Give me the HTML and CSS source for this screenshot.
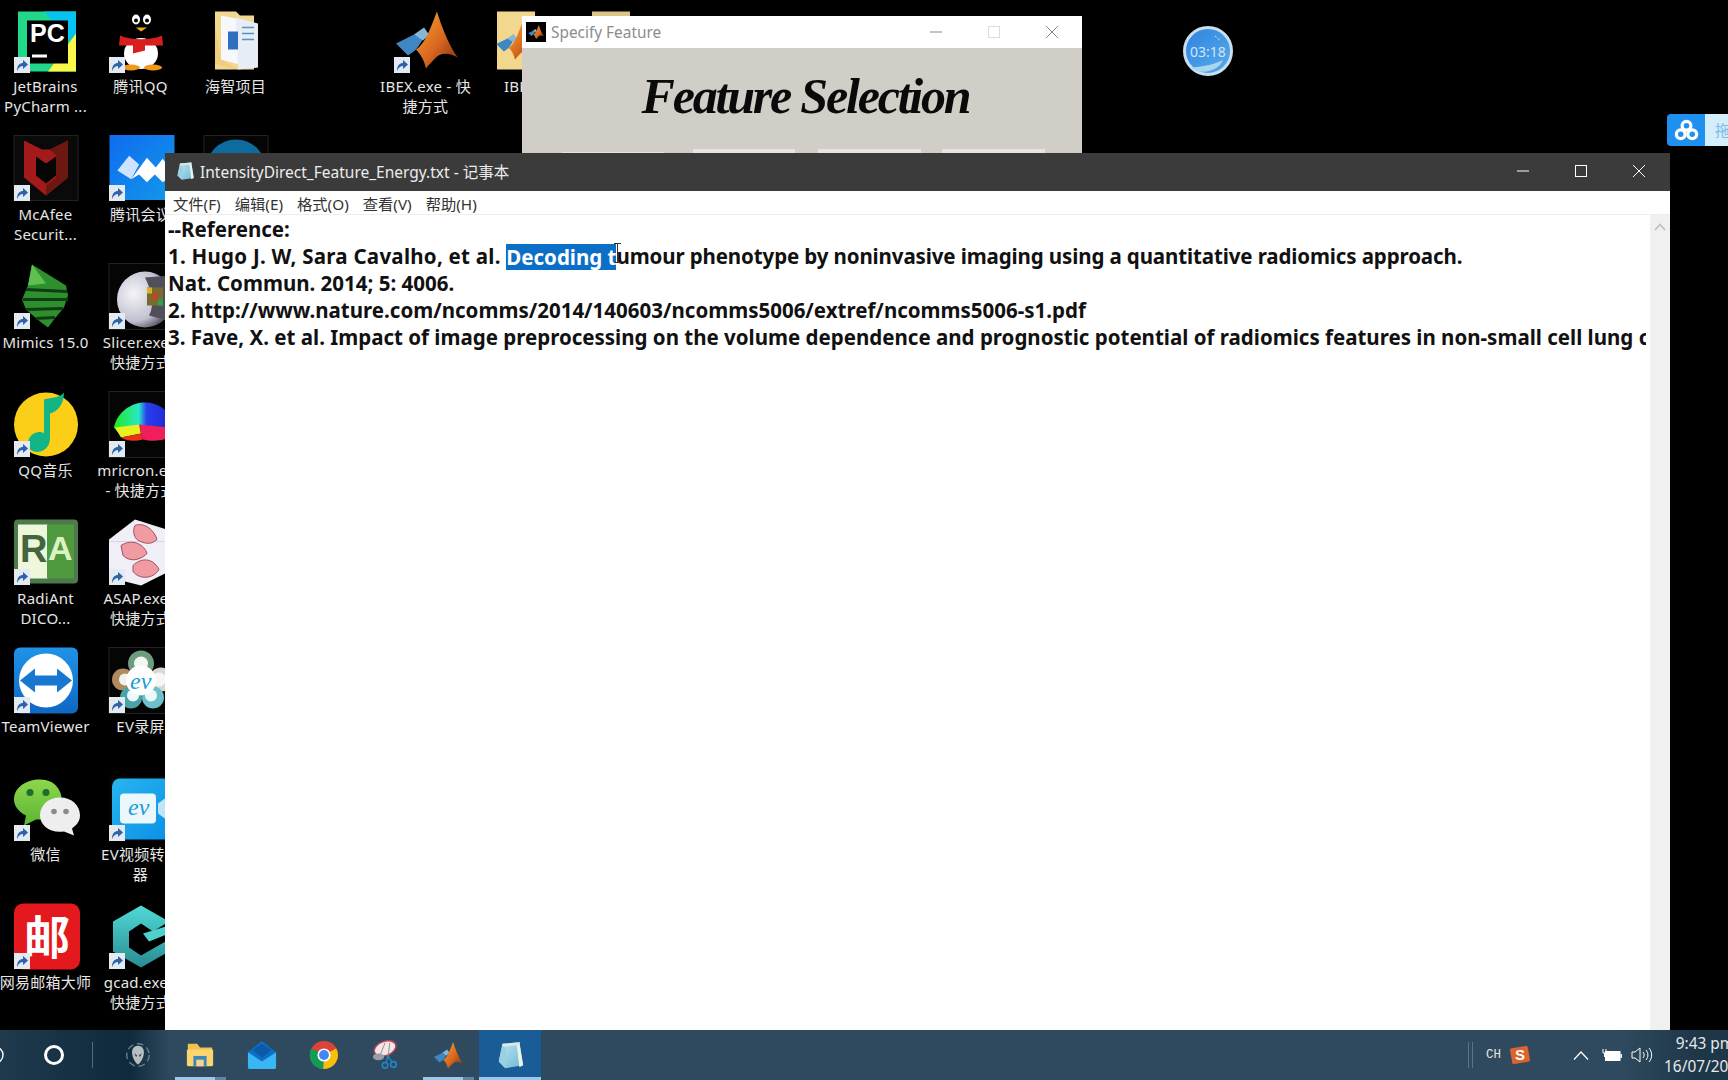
FILE: index.html
```html
<!DOCTYPE html>
<html lang="zh">
<head>
<meta charset="utf-8">
<title>Desktop</title>
<link rel="stylesheet" href="styles.css">
</head>
<body>
<svg class="defs" xmlns="http://www.w3.org/2000/svg">
  <defs>
    <linearGradient id="gOrange" x1="0" y1="0" x2="1" y2="1"><stop offset="0" stop-color="#f6a535"/><stop offset=".55" stop-color="#d8661e"/><stop offset="1" stop-color="#7a2a10"/></linearGradient>
    <linearGradient id="gBlueV" x1="0" y1="0" x2="0" y2="1"><stop offset="0" stop-color="#1f93e8"/><stop offset="1" stop-color="#0e67c4"/></linearGradient>
    <linearGradient id="gSky" x1="0" y1="0" x2="1" y2="1"><stop offset="0" stop-color="#27b5f0"/><stop offset="1" stop-color="#0b8fe6"/></linearGradient>
    <linearGradient id="gMeet" x1="0" y1="0" x2="1" y2="1"><stop offset="0" stop-color="#0f6cf0"/><stop offset="1" stop-color="#1398e8"/></linearGradient>
    <linearGradient id="gGreen" x1="0" y1="0" x2="0" y2="1"><stop offset="0" stop-color="#8ed64e"/><stop offset="1" stop-color="#5cb531"/></linearGradient>
    <radialGradient id="gSphere" cx=".3" cy=".4" r=".7"><stop offset="0" stop-color="#f4f4f8"/><stop offset=".7" stop-color="#c0c0d0"/><stop offset="1" stop-color="#55505e"/></radialGradient>
    <linearGradient id="gPad" x1="0" y1="0" x2="1" y2="1"><stop offset="0" stop-color="#bfe6f3"/><stop offset="1" stop-color="#6fb9d3"/></linearGradient>
    <linearGradient id="gTeal" x1="0" y1="0" x2="0" y2="1"><stop offset="0" stop-color="#4fdad6"/><stop offset="1" stop-color="#2a8b92"/></linearGradient>
    <linearGradient id="gMri" x1="0" y1="0" x2="1" y2="0"><stop offset="0" stop-color="#22e81e"/><stop offset=".42" stop-color="#27e8c8"/><stop offset=".55" stop-color="#2a40ee"/><stop offset="1" stop-color="#1a22c8"/></linearGradient>

    <symbol id="i-short" viewBox="0 0 16 16"><rect width="16" height="16" fill="#e3eaf2"/><path d="M3 14 C3 8 6 6 9 6 L9 3 L14 7.5 L9 12 L9 9 C6.5 9 4.5 10.5 3 14Z" fill="#2d62a8"/></symbol>

    <symbol id="i-matlab" viewBox="0 0 64 64"><path d="M2 36 L20 27 L29 32 C26 36 24 40 21 43 L14 48Z" fill="#3f86c4"/><path d="M20 27 L30 20 L35 27 L29 33Z" fill="#86b6d8"/><path d="M43 4 C47 18 56 40 64 50 C56 46 48 44 42 50 C38 54 34 58 32 61 C30 52 26 46 22 42 C32 36 38 16 43 4Z" fill="url(#gOrange)"/></symbol>

    <symbol id="i-notepad" viewBox="0 0 64 64"><path d="M16 8 L52 5 L60 54 L22 60 L8 46Z" fill="url(#gPad)"/><path d="M8 46 L22 60 L24 20 L16 8Z" fill="#9bd0e2"/><path d="M52 5 L60 54 L52 58 L46 8Z" fill="#e7f3e7"/><path d="M16 8 L52 5 L52 11 L16 14Z" fill="#dbe7ea"/></symbol>

    <symbol id="i-folder" viewBox="0 0 64 64"><path d="M6 8 H26 L32 16 H58 V54 H6Z" fill="#f3c14e"/><rect x="4" y="20" width="56" height="36" rx="3" fill="#fbd66f"/><rect x="18" y="34" width="28" height="22" fill="#3f86b8"/><rect x="24" y="42" width="16" height="14" fill="#f3d58b"/></symbol>
  </defs>
</svg>

<main class="desktop">
  <div class="icon-grid">
    <!-- Column 1 -->
    <article class="dicon">
      <div class="dicon-art">
        <svg class="art" viewBox="0 0 64 64"><rect x="4" y="4" width="58" height="60" fill="#21d789"/><path d="M30 4 H62 V40Z" fill="#07c3f2"/><path d="M62 26 V64 H34Z" fill="#fcf84a"/><rect x="13" y="13" width="41" height="43" fill="#000"/><text class="pc-text" x="16" y="34">PC</text><rect x="18" y="47" width="15" height="3" fill="#fff"/></svg>
        <svg class="badge"><use href="#i-short"/></svg>
      </div>
      <p class="dlabel">JetBrains<br>PyCharm ...</p>
    </article>
    <article class="dicon">
      <div class="dicon-art">
        <svg class="art" viewBox="0 0 64 64"><rect x="0" y="0" width="64" height="65" fill="#0a0a0a" stroke="#222"/><path d="M10 5 L28 14 L36 14 L54 5 V42 L32 60 L10 42Z" fill="#a31a1a"/><path d="M36 14 L54 5 V42 L32 60 V50 L42 42 V20Z" fill="#6c1710"/><path d="M22 21 L32 28 L42 21 V40 L32 48 L22 40Z" fill="#060606"/></svg>
        <svg class="badge"><use href="#i-short"/></svg>
      </div>
      <p class="dlabel">McAfee<br>Securit...</p>
    </article>
    <article class="dicon">
      <div class="dicon-art">
        <svg class="art" viewBox="0 0 64 64"><path d="M18 1 L52 22 L54 32 L50 44 L40 56 L34 64 L26 58 L12 46 L8 36 L14 22Z" fill="#2e8f2e"/><path d="M18 1 L32 20 L14 22Z" fill="#5fc04f"/><path d="M12 26 L53 28 M9 36 L54 36 M12 46 L49 45 M22 55 L41 54" stroke="#0f3d12" stroke-width="3" fill="none"/></svg>
        <svg class="badge"><use href="#i-short"/></svg>
      </div>
      <p class="dlabel">Mimics 15.0</p>
    </article>
    <article class="dicon">
      <div class="dicon-art">
        <svg class="art" viewBox="0 0 64 64"><circle cx="32" cy="33" r="32" fill="#fbcf17"/><path d="M30 8 C38 6 46 6 50 1 C50 12 44 20 36 22 V47 C36 56 28 62 20 60 C12 58 12 46 20 42 C24 40 28 40 30 42Z" fill="#12b585"/></svg>
        <svg class="badge"><use href="#i-short"/></svg>
      </div>
      <p class="dlabel">QQ音乐</p>
    </article>
    <article class="dicon">
      <div class="dicon-art">
        <svg class="art" viewBox="0 0 64 64"><rect x="0" y="0" width="64" height="64" rx="4" fill="#4d7a4c"/><rect x="4" y="5" width="30" height="54" fill="#eef6dc"/><rect x="33" y="5" width="27" height="54" fill="#4f9a3f"/><text class="ra-r" x="6" y="42">R</text><text class="ra-a" x="34" y="40">A</text></svg>
        <svg class="badge"><use href="#i-short"/></svg>
      </div>
      <p class="dlabel">RadiAnt<br>DICO...</p>
    </article>
    <article class="dicon">
      <div class="dicon-art">
        <svg class="art" viewBox="0 0 64 64"><rect x="0" y="0" width="64" height="66" rx="6" fill="url(#gBlueV)"/><circle cx="32" cy="33" r="27" fill="#fff"/><path d="M6 33 L21 21 V28 H43 V21 L58 33 L43 45 V38 H21 V45Z" fill="#1877d0"/></svg>
        <svg class="badge"><use href="#i-short"/></svg>
      </div>
      <p class="dlabel">TeamViewer</p>
    </article>
    <article class="dicon">
      <div class="dicon-art">
        <svg class="art" viewBox="0 0 64 64"><path d="M26 4 C42 4 48 16 48 26 C48 38 36 44 26 44 L22 44 L10 50 L12 40 C4 36 0 30 0 24 C0 12 12 4 26 4Z" fill="url(#gGreen)"/><circle cx="16" cy="17" r="3.5" fill="#1d6e2c"/><circle cx="32" cy="17" r="3.5" fill="#1d6e2c"/><path d="M46 22 C58 22 66 30 66 40 C66 46 62 50 58 53 L60 60 L50 56 C36 58 26 50 26 40 C26 30 34 22 46 22Z" fill="#eeeeee"/><circle cx="40" cy="36" r="2.8" fill="#8a8a8a"/><circle cx="52" cy="36" r="2.8" fill="#8a8a8a"/></svg>
        <svg class="badge"><use href="#i-short"/></svg>
      </div>
      <p class="dlabel">微信</p>
    </article>
    <article class="dicon">
      <div class="dicon-art">
        <svg class="art" viewBox="0 0 64 64"><rect x="0" y="0" width="66" height="66" rx="9" fill="#e4191d"/><text class="mail-glyph" x="33" y="50">邮</text></svg>
        <svg class="badge"><use href="#i-short"/></svg>
      </div>
      <p class="dlabel">网易邮箱大师</p>
    </article>

    <!-- Column 2 -->
    <article class="dicon c2">
      <div class="dicon-art">
        <svg class="art" viewBox="0 0 64 64"><ellipse cx="32" cy="17" rx="14" ry="15" fill="#000"/><ellipse cx="27" cy="12" rx="4" ry="5" fill="#fff"/><ellipse cx="38" cy="12" rx="4" ry="5" fill="#fff"/><circle cx="27" cy="13" r="2" fill="#000"/><circle cx="38" cy="13" r="2" fill="#000"/><path d="M27 20 H38 L32 24Z" fill="#f2ab1d"/><ellipse cx="32" cy="46" rx="17" ry="15.5" fill="#fff"/><path d="M11 28 C22 33 42 33 53 28 L54 38 H36 V43 L24 46 V38 H10Z" fill="#d81e1e"/><ellipse cx="22" cy="60" rx="9" ry="3" fill="#ef9a1a"/><ellipse cx="44" cy="60" rx="9" ry="3" fill="#ef9a1a"/></svg>
        <svg class="badge"><use href="#i-short"/></svg>
      </div>
      <p class="dlabel">腾讯QQ</p>
    </article>
    <article class="dicon">
      <div class="dicon-art">
        <svg class="art art-wide" viewBox="0 0 66 66"><rect width="66" height="66" fill="url(#gMeet)"/><path d="M8 36 L20 21 L30 30 L22 45Z" fill="#cfe3ff"/><path d="M22 45 L38 23 L47 33 L54 24 L66 40 L54 48 L46 40 L38 48 L30 40Z" fill="#fff"/></svg>
        <svg class="badge"><use href="#i-short"/></svg>
      </div>
      <p class="dlabel">腾讯会议</p>
    </article>
    <article class="dicon">
      <div class="dicon-art">
        <svg class="art" viewBox="0 0 64 64"><rect width="64" height="66" fill="#050505" stroke="#222"/><circle cx="36" cy="36" r="28" fill="url(#gSphere)"/><path d="M36 14 L62 12 V58 L40 52 C46 42 42 26 36 14Z" fill="#50505a"/><rect x="38" y="24" width="16" height="18" fill="#7a6a30"/><rect x="38" y="24" width="5" height="6" fill="#d8b030"/><rect x="44" y="30" width="5" height="6" fill="#c84020"/><rect x="49" y="36" width="5" height="6" fill="#30a050"/></svg>
        <svg class="badge"><use href="#i-short"/></svg>
      </div>
      <p class="dlabel">Slicer.exe -<br>快捷方式</p>
    </article>
    <article class="dicon">
      <div class="dicon-art">
        <svg class="art" viewBox="0 0 64 64"><rect width="64" height="66" fill="#050505" stroke="#222"/><path d="M5 36 C8 22 20 12 34 11 C48 10 60 18 64 32 L60 42 C50 38 40 36 32 36 L10 42Z" fill="url(#gMri)"/><path d="M6 36 L30 33 L32 42 L12 46Z" fill="#e8f01e"/><path d="M30 33 L60 36 L62 46 C50 50 42 50 34 48 L32 42Z" fill="#f01e5a"/><path d="M12 46 L32 42 L34 48 C26 50 18 50 12 46Z" fill="#e8321e"/></svg>
        <svg class="badge"><use href="#i-short"/></svg>
      </div>
      <p class="dlabel">mricron.exe<br>- 快捷方式</p>
    </article>
    <article class="dicon">
      <div class="dicon-art">
        <svg class="art" viewBox="0 0 64 64"><path d="M0 20 L26 0 L64 12 V50 L32 66 L0 58Z" fill="#f0eef6"/><path d="M0 22 H62" stroke="#d8d4e6" stroke-width="1"/><path d="M26 6 C36 2 46 12 48 20 C42 26 34 24 28 20 C24 16 24 10 26 6Z" fill="#f09aa2" stroke="#a05060"/><path d="M12 26 C24 18 36 26 38 34 C30 42 20 42 14 36Z" fill="#f09aa2" stroke="#a05060"/><path d="M24 46 C32 38 44 38 50 50 C44 60 30 60 24 52Z" fill="#f09aa2" stroke="#a05060"/></svg>
        <svg class="badge"><use href="#i-short"/></svg>
      </div>
      <p class="dlabel">ASAP.exe -<br>快捷方式</p>
    </article>
    <article class="dicon">
      <div class="dicon-art">
        <svg class="art" viewBox="0 0 64 64"><rect width="64" height="66" fill="#050505" stroke="#222"/><circle cx="32" cy="16" r="13" fill="#6e9c7e"/><circle cx="14" cy="32" r="11" fill="#b08a5e"/><circle cx="52" cy="32" r="12" fill="#d8d8d2"/><circle cx="22" cy="50" r="11" fill="#4aa3a8"/><circle cx="44" cy="50" r="11" fill="#6cc0c8"/><circle cx="32" cy="16" r="7" fill="#f2f6f2"/><circle cx="16" cy="32" r="6" fill="#f2f2ec"/><circle cx="50" cy="32" r="7" fill="#f6f6f6"/><circle cx="24" cy="48" r="6" fill="#eef8f8"/><circle cx="42" cy="48" r="6" fill="#eef8f8"/><circle cx="32" cy="33" r="15" fill="#fff"/><text class="ev-text" x="21" y="41">ev</text></svg>
        <svg class="badge"><use href="#i-short"/></svg>
      </div>
      <p class="dlabel">EV录屏</p>
    </article>
    <article class="dicon">
      <div class="dicon-art">
        <svg class="art" viewBox="0 0 64 64"><rect width="64" height="66" fill="#050505"/><rect x="3" y="3" width="60" height="61" rx="8" fill="url(#gSky)"/><rect x="11" y="18" width="36" height="30" rx="4" fill="#eaf7fd"/><path d="M49 28 L60 20 V46 L49 38Z" fill="#bfe5f7"/><text class="ev-text" x="19" y="39">ev</text></svg>
        <svg class="badge"><use href="#i-short"/></svg>
      </div>
      <p class="dlabel">EV视频转换<br>器</p>
    </article>
    <article class="dicon">
      <div class="dicon-art">
        <svg class="art" viewBox="0 0 64 64"><path d="M32 2 L60 18 L44 28 L32 20 L20 28 V44 L32 52 L60 36 V48 L32 64 L4 48 V18Z" fill="url(#gTeal)"/><path d="M34 30 L60 22 V30 L40 38Z" fill="#4fd0cc"/></svg>
        <svg class="badge"><use href="#i-short"/></svg>
      </div>
      <p class="dlabel">gcad.exe -<br>快捷方式</p>
    </article>

    <!-- Column 3 -->
    <article class="dicon c3">
      <div class="dicon-art">
        <svg class="art" viewBox="0 0 64 64"><path d="M11 4 H32 L36 8 H50 V62 H11Z" fill="#f2d78e"/><path d="M17 8 L46 14 L46 60 L17 52Z" fill="#f6f8fb"/><path d="M32 10 L54 16 V60 L34 62Z" fill="#e6edf5"/><path d="M38 20 H50 M38 26 H50 M38 32 H50" stroke="#5d8fc4" stroke-width="1.5"/><rect x="24" y="24" width="10" height="18" fill="#2f6fc0"/><path d="M11 18 L17 52 L34 62 L11 56Z" fill="#efcd7c"/></svg>
      </div>
      <p class="dlabel">海智项目</p>
    </article>
    <article class="dicon c3">
      <div class="dicon-art">
        <svg class="art" viewBox="0 0 64 64"><rect width="64" height="66" fill="#050505" stroke="#222"/><circle cx="32" cy="34" r="30" fill="#0d6c9f"/></svg>
      </div>
    </article>

    <!-- Columns 5-7, top row -->
    <article class="dicon c5">
      <div class="dicon-art">
        <svg class="art" viewBox="0 0 64 64"><use href="#i-matlab"/></svg>
        <svg class="badge"><use href="#i-short"/></svg>
      </div>
      <p class="dlabel">IBEX.exe - 快<br>捷方式</p>
    </article>
    <article class="dicon c6">
      <div class="dicon-art">
        <svg class="art" viewBox="0 0 64 64"><path d="M8 4 H46 V62 H8Z" fill="#f2d78e"/><svg x="6" y="14" width="40" height="40" viewBox="0 0 64 64"><use href="#i-matlab"/></svg></svg>
      </div>
      <p class="dlabel">IBEX</p>
    </article>
    <article class="dicon c7">
      <div class="dicon-art">
        <svg class="art" viewBox="0 0 64 64"><path d="M8 4 H46 V62 H8Z" fill="#dcc48a"/></svg>
      </div>
    </article>
  </div>

  <div class="timer">
    <svg class="timer-wave" viewBox="0 0 50 50"><path d="M8 42 C18 40 28 40 40 34 C36 44 20 50 8 42Z" fill="#a9d6ef"/><path d="M32 10 L38 15" stroke="#cfe6fa" stroke-width="1" stroke-dasharray="2 2"/></svg>
    <span class="timer-text">03:18</span>
  </div>

  <aside class="cloud">
    <div class="cloud-logo">
      <svg class="cloud-svg" viewBox="0 0 26 24"><g fill="none" stroke="#fff" stroke-width="3.4"><circle cx="13" cy="7" r="4.6"/><circle cx="7" cy="16" r="4.6"/><circle cx="19" cy="16" r="4.6"/></g></svg>
    </div>
    <span class="cloud-text">拖</span>
  </aside>

  <section class="win feature">
    <header class="f-title">
      <svg class="f-logo" viewBox="0 0 64 64"><rect width="64" height="64" fill="#000"/><svg x="6" y="6" width="52" height="52" viewBox="0 0 64 64"><use href="#i-matlab"/></svg></svg>
      <span class="f-name">Specify Feature</span>
      <div class="ctrls">
        <span class="ctrl"><svg class="glyph dim" viewBox="0 0 12 12"><path d="M0 6 H12"/></svg></span>
        <span class="ctrl"><svg class="glyph dimmer" viewBox="0 0 12 12"><rect x=".5" y=".5" width="11" height="11"/></svg></span>
        <span class="ctrl"><svg class="glyph dim" viewBox="0 0 12 12"><path d="M0 0 L12 12 M12 0 L0 12"/></svg></span>
      </div>
    </header>
    <div class="f-body">
      <h1 class="f-heading">Feature Selection</h1>
      <div class="f-btns">
        <span class="f-btn low"></span>
        <span class="f-btn b2"></span>
        <span class="f-btn b3"></span>
        <span class="f-btn b4"></span>
      </div>
    </div>
  </section>

  <section class="win notepad">
    <header class="n-title">
      <svg class="n-logo" viewBox="0 0 64 64"><use href="#i-notepad"/></svg>
      <span class="n-name">IntensityDirect_Feature_Energy.txt - 记事本</span>
      <div class="ctrls">
        <span class="ctrl"><svg class="glyph light" viewBox="0 0 12 12"><path d="M0 6 H12"/></svg></span>
        <span class="ctrl"><svg class="glyph light" viewBox="0 0 12 12"><rect x=".5" y=".5" width="11" height="11"/></svg></span>
        <span class="ctrl"><svg class="glyph light" viewBox="0 0 12 12"><path d="M0 0 L12 12 M12 0 L0 12"/></svg></span>
      </div>
    </header>
    <nav class="n-menu">
      <span class="m1">文件(F)</span>
      <span class="m2">编辑(E)</span>
      <span class="m3">格式(O)</span>
      <span class="m4">查看(V)</span>
      <span class="m5">帮助(H)</span>
    </nav>
    <div class="n-body">
      <div class="n-text">
        <div class="line">--Reference:</div>
        <div class="line"><span class="pre">1. Hugo J. W, Sara Cavalho, et al. </span><span class="sel">Decoding t</span><span class="ibeam"><svg class="ibeam-svg" viewBox="0 0 7 20"><path d="M0 .5 H7 M0 19.5 H7 M3.5 .5 V19.5" fill="none" stroke="#333" stroke-width="1"/></svg></span><span class="post">umour phenotype by noninvasive imaging using a quantitative radiomics approach.</span></div>
        <div class="line">Nat. Commun. 2014; 5: 4006.</div>
        <div class="line">2. http://www.nature.com/ncomms/2014/140603/ncomms5006/extref/ncomms5006-s1.pdf</div>
        <div class="line">3. Fave, X. et al. Impact of image preprocessing on the volume dependence and prognostic potential of radiomics features in non-small cell lung cancer.</div>
      </div>
      <div class="n-scroll">
        <svg class="n-arrow" viewBox="0 0 12 8"><path d="M1 7 L6 1.5 L11 7" fill="none" stroke="#bdbdbd" stroke-width="1.6"/></svg>
      </div>
    </div>
  </section>
</main>

<footer class="taskbar">
  <div class="tb-left">
    <svg class="tb-search" viewBox="0 0 4 18"><circle cx="-5" cy="9" r="8" fill="none" stroke="#fff" stroke-width="1.4"/></svg>
    <span class="tb-cortana"></span>
    <span class="tb-sep"></span>
  </div>
  <div class="tb-apps">
    <span class="tb-btn">
      <svg class="tb-icon" viewBox="0 0 64 64"><circle cx="32" cy="32" r="24" fill="none" stroke="#6b7f8c" stroke-width="3" stroke-dasharray="14 8"/><path d="M32 12 C44 12 46 24 44 32 C42 42 36 50 32 52 C28 50 22 42 20 32 C18 24 20 12 32 12Z" fill="#b6bec3"/><path d="M24 28 L30 33 L28 36 Z M40 28 L34 33 L36 36Z" fill="#1a2b36"/></svg>
    </span>
    <span class="tb-btn open wide">
      <svg class="tb-icon" viewBox="0 0 64 64"><use href="#i-folder"/></svg>
    </span>
    <span class="tb-btn">
      <svg class="tb-icon" viewBox="0 0 64 64"><path d="M32 2 L62 26 V60 H2 V26Z" fill="#0f6fc6"/><path d="M2 26 L32 46 L62 26 V58 a4 4 0 0 1 -4 4 H6 a4 4 0 0 1 -4 -4Z" fill="#39b6f4"/><path d="M12 22 L32 38 L52 22 L32 8Z" fill="#0a5aa8"/></svg>
    </span>
    <span class="tb-btn">
      <svg class="tb-icon" viewBox="0 0 64 64"><circle cx="32" cy="32" r="30" fill="#db4437"/><path d="M32 32 L58 18 A30 30 0 0 1 30 62Z" fill="#f4c20d"/><path d="M32 32 L30 62 A30 30 0 0 1 5 18Z" fill="#0f9d58"/><circle cx="32" cy="32" r="14" fill="#fff"/><circle cx="32" cy="32" r="10.5" fill="#4285f4"/></svg>
    </span>
    <span class="tb-btn">
      <svg class="tb-icon" viewBox="0 0 64 64"><ellipse cx="30" cy="18" rx="24" ry="15" transform="rotate(-20 30 18)" fill="#f2e6e6" stroke="#c2435a" stroke-width="3"/><path d="M18 36 L30 6 M40 6 L36 40" stroke="#8c8c8c" stroke-width="2"/><ellipse cx="16" cy="36" rx="12" ry="7" fill="#9a9ca8"/><circle cx="30" cy="54" r="6" fill="none" stroke="#1f86c8" stroke-width="3.5"/><circle cx="48" cy="52" r="6" fill="none" stroke="#1f86c8" stroke-width="3.5"/><path d="M32 49 L36 34 M45 47 L36 34" stroke="#1f86c8" stroke-width="3"/></svg>
    </span>
    <span class="tb-btn open">
      <svg class="tb-icon" viewBox="0 0 64 64"><use href="#i-matlab"/></svg>
    </span>
    <span class="tb-btn active">
      <svg class="tb-icon" viewBox="0 0 64 64"><use href="#i-notepad"/></svg>
    </span>
  </div>
  <div class="tb-tray">
    <span class="tray-sep"></span>
    <span class="tray-ch">CH</span>
    <svg class="tray-sogou" viewBox="0 0 22 22"><rect x="2" y="3" width="18" height="16" rx="2" transform="rotate(-10 11 11)" fill="#d9642c"/><text class="sogou-s" x="11" y="16">S</text></svg>
    <svg class="tray-caret" viewBox="0 0 16 9"><path d="M1 8.5 L8 1 L15 8.5" fill="none" stroke="#fff" stroke-width="1.2"/></svg>
    <svg class="tray-batt" viewBox="0 0 20 14"><path d="M1 1 V5 H4 V1 M2.5 5 V9" stroke="#fff" fill="none"/><rect x="3.5" y="3.5" width="14.5" height="9" fill="#fff" stroke="#fff"/><rect x="18.5" y="6" width="1.5" height="4" fill="#fff"/></svg>
    <svg class="tray-vol" viewBox="0 0 22 16"><path d="M1 5 H4 L9 1 V15 L4 11 H1Z" fill="none" stroke="#fff" stroke-width="1"/><path d="M12 5 C13.5 7 13.5 9 12 11 M15 3 C17.5 6 17.5 10 15 13 M18 1 C21.5 5 21.5 11 18 15" fill="none" stroke="#fff" stroke-width="1"/></svg>
    <div class="tray-clock"><span>9:43 pm</span><span>16/07/2020</span></div>
  </div>
</footer>
</body>
</html>
```
FILE: styles.css
```css
* { box-sizing: border-box; }

html, body {
  margin: 0;
  height: 100%;
  overflow: hidden;
  background: #000;
}

body {
  display: flex;
  flex-direction: column;
  width: 1728px;
  height: 1080px;
  font-family: "Noto Sans", "Noto Sans CJK SC", sans-serif;
}

.defs { display: block; width: 0; height: 0; }

.desktop {
  position: relative;
  flex: none;
  height: 1030px;
  overflow: hidden;
  background: #000;
}

/* Desktop icons */
.icon-grid {
  display: grid;
  grid-auto-flow: column;
  grid-template-columns: repeat(7, 95px);
  grid-template-rows: repeat(8, 128px);
  margin-left: -2px;
  padding-top: 7px;
  width: 700px;
}

.dicon { display: flex; flex-direction: column; align-items: center; }
.c2 { grid-column: 2; grid-row: 1; }
.c3 { grid-column: 3; }
.c5 { grid-column: 5; grid-row: 1; }
.c6 { grid-column: 6; grid-row: 1; }
.c7 { grid-column: 7; grid-row: 1; }

.dicon-art { position: relative; width: 64px; height: 65px; }
.art { display: block; width: 64px; height: 65px; overflow: visible; }
.art-wide { width: 66px; }
.badge { position: absolute; left: 0; bottom: -1px; width: 16px; height: 16px; }

.dlabel {
  margin: 4px 0 0;
  width: 95px;
  font-size: 15px;
  letter-spacing: .25px;
  line-height: 20px;
  color: #e6e6e6;
  text-align: center;
  white-space: nowrap;
}

.pc-text { font: 700 25px "Liberation Sans", sans-serif; fill: #fff; }
.ra-r { font: 700 38px "Liberation Sans", sans-serif; fill: #44663f; }
.ra-a { font: 700 34px "Liberation Sans", sans-serif; fill: #dcf2c4; }
.mail-glyph { font: 700 46px "Noto Sans CJK SC", sans-serif; fill: #fff; text-anchor: middle; }
.ev-text { font: italic 400 24px "Liberation Serif", serif; fill: #1c9bd8; }

/* Floating widgets */
.timer {
  position: absolute;
  left: 1183px;
  top: 26px;
  width: 50px;
  height: 50px;
  display: flex;
  align-items: center;
  justify-content: center;
  border-radius: 50%;
  border: 3px solid #c9dff0;
  background: linear-gradient(135deg, #2f84e2, #58abe6);
}
.timer-wave { position: absolute; left: -3px; top: -3px; width: 50px; height: 50px; }
.timer-text { position: relative; font-size: 14px; color: #cfe6fa; }

.cloud {
  position: absolute;
  left: 1667px;
  top: 114px;
  width: 61px;
  height: 32px;
  display: flex;
  border-radius: 4px 0 0 4px;
  overflow: hidden;
}
.cloud-logo {
  flex: none;
  width: 38px;
  display: flex;
  align-items: center;
  justify-content: center;
  background: #1f8ff0;
}
.cloud-svg { width: 25px; height: 23px; }
.cloud-text {
  flex: 1;
  padding-left: 10px;
  font-size: 15px;
  line-height: 32px;
  color: #7dbbe6;
  background: #d5eefc;
}

/* Windows */
.win { position: absolute; display: flex; flex-direction: column; }

.ctrls { display: flex; margin-left: auto; }
.ctrl { width: 58px; display: flex; align-items: center; justify-content: center; }
.glyph { width: 12px; height: 12px; fill: none; stroke-width: 1; overflow: visible; }
.glyph.light { stroke: #fff; }
.glyph.dim { stroke: #8b8b8b; }
.glyph.dimmer { stroke: #dcdcdc; }

.feature { left: 522px; top: 16px; width: 560px; height: 137px; background: #d0cec6; overflow: hidden; }
.f-title { flex: none; height: 32px; display: flex; align-items: center; background: #fff; padding-left: 4px; padding-right: 1px; }
.f-logo { flex: none; width: 20px; height: 20px; }
.f-name { margin-left: 5px; font-size: 15.4px; color: #8c8c8c; }
.f-body { flex: 1; display: flex; flex-direction: column; }
.f-heading {
  margin: 18px 0 0;
  padding-left: 7px;
  height: 66px;
  text-align: center;
  font: italic 700 50px/60px "Liberation Serif", serif;
  letter-spacing: -2.2px;
  color: #0a0a0a;
}
.f-btns { display: flex; align-items: flex-start; padding-left: 40px; margin-top: 17px; }
.f-btn { flex: none; width: 102px; height: 10px; background: #e6e5e1; }
.f-btn.low { margin-top: 3px; }
.f-btn.b2 { margin-left: 29px; }
.f-btn.b3 { margin-left: 23px; width: 103px; }
.f-btn.b4 { margin-left: 21px; width: 103px; }

.notepad { left: 165px; top: 153px; width: 1505px; height: 877px; background: #fff; }
.n-title { flex: none; height: 38px; display: flex; align-items: center; background: #3b3b3b; padding: 0 2px 2px 10px; }
.n-logo { flex: none; width: 20px; height: 20px; }
.n-name { margin-left: 5px; font-size: 15.5px; color: #ececec; white-space: nowrap; }

.n-menu { flex: none; height: 24px; display: flex; align-items: center; background: #fff; border-bottom: 1px solid #eee; font-size: 15.3px; color: #333; padding-left: 8px; }
.m2, .m3, .m4, .m5 { margin-left: 14px; }

.n-body { flex: 1; display: flex; min-height: 0; }
.n-text { flex: 1; min-width: 0; margin-right: 4px; overflow: hidden; padding: 1px 0 0 3px; font-weight: 700; font-size: 20.5px; line-height: 27px; color: #111; white-space: nowrap; }
.line { height: 27px; }
.pre { letter-spacing: .25px; }
.post { letter-spacing: -.12px; }
.sel { display: inline-block; height: 26px; line-height: 26px; background: #0b6fc8; color: #fff; vertical-align: top; margin-top: 1px; }
.ibeam { position: relative; }
.ibeam-svg { position: absolute; left: -2px; top: 1px; width: 7px; height: 20px; }
.n-scroll { flex: none; width: 20px; background: #f0f0f0; display: flex; justify-content: center; padding-top: 8px; }
.n-arrow { width: 12px; height: 8px; }

/* Taskbar */
.taskbar {
  flex: none;
  height: 50px;
  display: flex;
  background: linear-gradient(90deg, #1f394d 0, #0f2a3d 130px, #2f4a5e 170px, #2f4a5e 1620px, #1d3648 1700px);
}
.tb-left { flex: none; width: 107px; display: flex; align-items: center; }
.tb-search { flex: none; width: 4px; height: 18px; }
.tb-cortana { flex: none; margin-left: 40px; width: 20px; height: 20px; border: 3px solid #fff; border-radius: 50%; }
.tb-sep { flex: none; margin-left: 28px; width: 1px; height: 26px; background: #55697a; }

.tb-apps { flex: none; display: flex; }
.tb-btn { position: relative; flex: none; width: 62px; display: flex; align-items: center; justify-content: center; }
.tb-icon { width: 30px; height: 30px; overflow: visible; }
.tb-btn.open::after {
  content: "";
  position: absolute;
  left: 6px;
  right: 5px;
  bottom: 0;
  height: 3px;
  background: linear-gradient(90deg, #9cc8ee 78%, #5f86a6 78%);
}
.tb-btn.active { background: #1a5c96; }
.tb-btn.active::after {
  content: "";
  position: absolute;
  left: 0;
  right: 0;
  bottom: 0;
  height: 3px;
  background: #9cc8ee;
}

.tb-tray { flex: none; margin-left: auto; width: 260px; display: flex; align-items: center; color: #fff; }
.tray-sep { flex: none; width: 5px; height: 26px; border-left: 1px solid #5d7486; border-right: 1px solid #5d7486; }
.tray-ch { flex: none; margin-left: 13px; width: 15px; font: 12.5px "Liberation Mono", monospace; color: #e4e4e4; }
.tray-sogou { flex: none; margin-left: 8px; width: 22px; height: 22px; }
.sogou-s { font: 700 15px "Liberation Sans", sans-serif; fill: #fff; text-anchor: middle; }
.tray-caret { flex: none; margin-left: 42px; width: 16px; height: 9px; }
.tray-batt { flex: none; margin-left: 13px; width: 20px; height: 14px; }
.tray-vol { flex: none; margin-left: 9px; width: 22px; height: 16px; }
.tray-clock { flex: none; margin-left: 12px; width: 80px; display: flex; flex-direction: column; align-items: center; font-size: 15.4px; line-height: 23px; color: #e8e8e8; white-space: nowrap; }
```
